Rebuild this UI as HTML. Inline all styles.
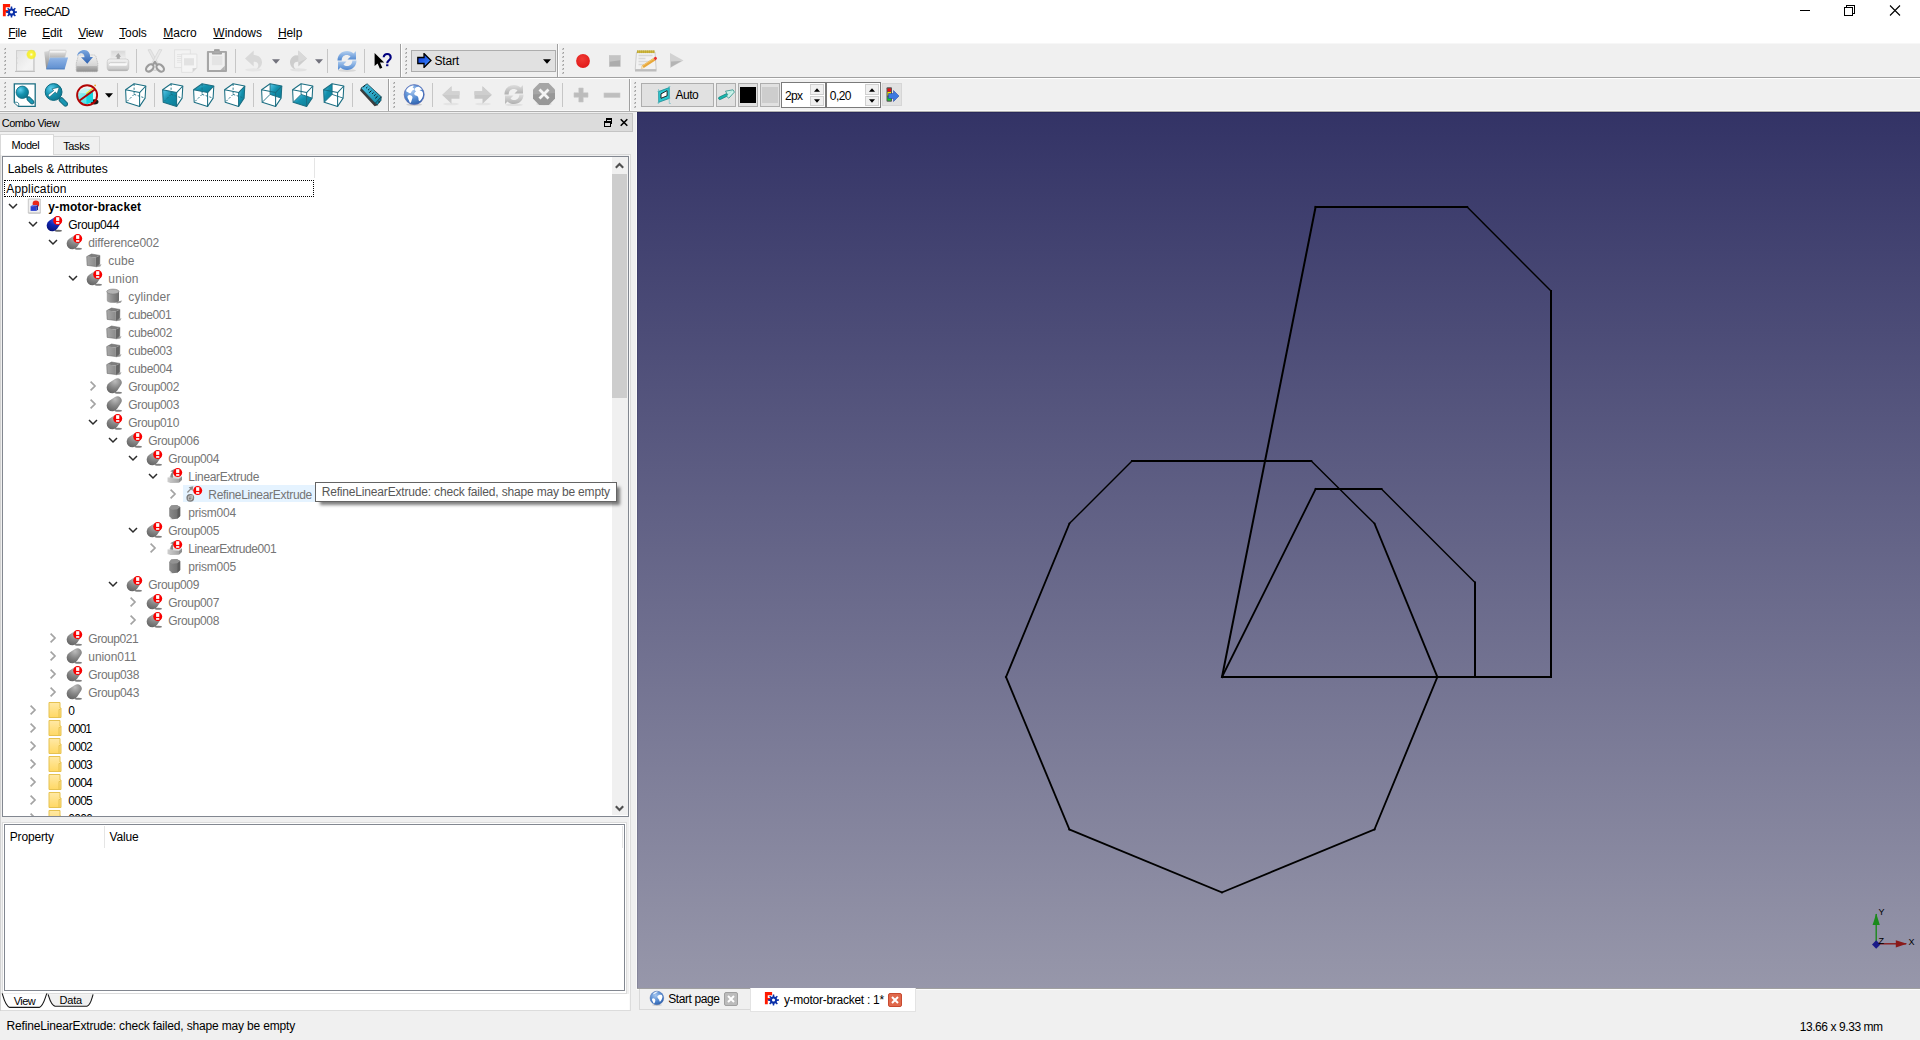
<!DOCTYPE html><html><head><meta charset="utf-8"><title>FreeCAD</title><style>
*{box-sizing:border-box;margin:0;padding:0}
html,body{width:1920px;height:1040px;overflow:hidden;background:#f0f0f0;font-family:"Liberation Sans",sans-serif;font-size:12px;color:#000}
.a{position:absolute}
.t{position:absolute;white-space:nowrap;line-height:14px;height:14px}
u{text-decoration:underline;text-underline-offset:1px}
.sep{position:absolute;width:1px;background:#c8c8c8}
.grip{position:absolute;width:3px}
</style></head><body>
<svg width="0" height="0" style="position:absolute"><defs>
<radialGradient id="gb" cx="0.55" cy="0.2" r="0.9"><stop offset="0" stop-color="#4a66ec"/><stop offset="0.45" stop-color="#0f26b4"/><stop offset="1" stop-color="#050e6c"/></radialGradient>
<radialGradient id="gg" cx="0.55" cy="0.2" r="0.9"><stop offset="0" stop-color="#bcbcbc"/><stop offset="0.5" stop-color="#868686"/><stop offset="1" stop-color="#5e5e5e"/></radialGradient>
<radialGradient id="gg2" cx="0.4" cy="0.25" r="0.8"><stop offset="0" stop-color="#b8b8b8"/><stop offset="0.7" stop-color="#8a8a8a"/><stop offset="1" stop-color="#7a7a7a"/></radialGradient>
<linearGradient id="gc" x1="0" y1="0" x2="1" y2="0"><stop offset="0" stop-color="#a8a8a8"/><stop offset="1" stop-color="#6c6c6c"/></linearGradient>
<linearGradient id="gcf" x1="0" y1="0" x2="1" y2="0"><stop offset="0" stop-color="#a8a8a8"/><stop offset="1" stop-color="#8a8a8a"/></linearGradient>
<linearGradient id="gcp" x1="0" y1="0" x2="1" y2="0"><stop offset="0" stop-color="#8a8a8a"/><stop offset="1" stop-color="#6a6a6a"/></linearGradient>
<linearGradient id="gcx" x1="0" y1="0" x2="1" y2="0"><stop offset="0" stop-color="#cfcfcf"/><stop offset="1" stop-color="#a4a4a4"/></linearGradient>
<linearGradient id="gf" x1="0" y1="0" x2="0" y2="1"><stop offset="0" stop-color="#ffe9a6"/><stop offset="1" stop-color="#ffd864"/></linearGradient>

<linearGradient id="opg" x1="0" y1="0" x2="0" y2="1"><stop offset="0" stop-color="#dcdcdc"/><stop offset="1" stop-color="#b4b4b4"/></linearGradient>
<linearGradient id="ppg" x1="0" y1="0" x2="0" y2="1"><stop offset="0" stop-color="#d8d8d8"/><stop offset="1" stop-color="#f2f2f2"/></linearGradient>
<linearGradient id="clipg" x1="0" y1="0" x2="0" y2="1"><stop offset="0" stop-color="#8e8e8e"/><stop offset="1" stop-color="#b4b4b4"/></linearGradient>
<linearGradient id="rul" x1="0" y1="0" x2="1" y2="1"><stop offset="0" stop-color="#52c8ea"/><stop offset="1" stop-color="#0d88a4"/></linearGradient>
<linearGradient id="pg" x1="0" y1="0" x2="1" y2="1"><stop offset="0" stop-color="#e2e2e2"/><stop offset=".7" stop-color="#f4f4f4"/><stop offset="1" stop-color="#f0f0f0"/></linearGradient>
<radialGradient id="glow"><stop offset="0" stop-color="#fffff0"/><stop offset=".35" stop-color="#fbf33a"/><stop offset=".75" stop-color="#f4ee20" stop-opacity=".85"/><stop offset="1" stop-color="#f4ee20" stop-opacity="0"/></radialGradient>
<linearGradient id="fblue" x1="0" y1="0" x2="0" y2="1"><stop offset="0" stop-color="#8fb4e6"/><stop offset="1" stop-color="#5f8fd0"/></linearGradient>
<linearGradient id="fgray" x1="0" y1="0" x2="0" y2="1"><stop offset="0" stop-color="#d8d8d8"/><stop offset="1" stop-color="#8a8a8a"/></linearGradient>
<linearGradient id="drv" x1="0" y1="0" x2="0" y2="1"><stop offset="0" stop-color="#f2f2f2"/><stop offset="1" stop-color="#c4c4c4"/></linearGradient>
<linearGradient id="drvf" x1="0" y1="0" x2="0" y2="1"><stop offset="0" stop-color="#b8b8b8"/><stop offset="1" stop-color="#8e8e8e"/></linearGradient>
<linearGradient id="barr" x1="0" y1="0" x2="0" y2="1"><stop offset="0" stop-color="#7aa7e0"/><stop offset="1" stop-color="#2f62b0"/></linearGradient>
<linearGradient id="prn" x1="0" y1="0" x2="0" y2="1"><stop offset="0" stop-color="#f4f4f4"/><stop offset="1" stop-color="#c2c2c2"/></linearGradient>
<radialGradient id="teal" cx=".35" cy=".3" r=".8"><stop offset="0" stop-color="#5fd0f0"/><stop offset=".5" stop-color="#1592ae"/><stop offset="1" stop-color="#0b7088"/></radialGradient>
<linearGradient id="tealf" x1="0" y1="0" x2="1" y2="1"><stop offset="0" stop-color="#58c8ea"/><stop offset=".45" stop-color="#1390ac"/><stop offset="1" stop-color="#0c7c96"/></linearGradient>
<radialGradient id="globe" cx=".4" cy=".3" r=".75"><stop offset="0" stop-color="#a8c8f0"/><stop offset=".6" stop-color="#4f86cf"/><stop offset="1" stop-color="#2c5ea8"/></radialGradient>
<radialGradient id="rec" cx=".45" cy=".35" r=".7"><stop offset="0" stop-color="#f03a34"/><stop offset="1" stop-color="#e01818"/></radialGradient>
<linearGradient id="refb" x1="0" y1="0" x2="0" y2="1"><stop offset="0" stop-color="#b4d0f0"/><stop offset="1" stop-color="#4d86d0"/></linearGradient>
<linearGradient id="refg" x1="0" y1="0" x2="0" y2="1"><stop offset="0" stop-color="#dedede"/><stop offset="1" stop-color="#b0b0b0"/></linearGradient>
<linearGradient id="sblue" x1="0" y1="0" x2="1" y2="1"><stop offset="0" stop-color="#0a2fd0"/><stop offset=".6" stop-color="#2a6cf0"/><stop offset="1" stop-color="#58a0ff"/></linearGradient>
<linearGradient id="cy" x1="0" y1="0" x2="1" y2="1"><stop offset="0" stop-color="#b8f4f4"/><stop offset="1" stop-color="#18d8e0"/></linearGradient>
<g id="i-blue"><ellipse cx="10.800" cy="14.700" rx="3.600" ry="1" fill="#3c3c3c" opacity=".75"/><path d="M1.750 4.850L7.520 1.020A4.300 4.300 0 0 1 13.480 6.980L9.650 12.750A5.700 5.700 0 1 1 1.750 4.850Z" fill="url(#gb)"/></g>
<g id="i-gray"><ellipse cx="10.800" cy="14.700" rx="3.600" ry="1" fill="#4a4a4a" opacity=".7"/><path d="M1.750 4.850L7.520 1.020A4.300 4.300 0 0 1 13.480 6.980L9.650 12.750A5.700 5.700 0 1 1 1.750 4.850Z" fill="url(#gg)"/></g>
<g id="i-badge"><circle cx="10.200" cy="4.600" r="4.500" fill="#fa0000"/><rect x="8.600" y="1.200" width="3.200" height="3.700" fill="#fff"/><rect x="8.600" y="6.100" width="3.200" height="1.700" fill="#fff"/></g>
<g id="i-cube"><path d="M8.500 13.500l5.500-1.300l-1.200 2.300l-4.300.8z" fill="#555" opacity=".6"/><path d="M-.8 4.600l4.800-2.600l8.400 1.400l-4.200 2.200z" fill="#7e7e7e"/><path d="M-.8 4.600l9 1l.2 9l-8.800-1.200z" fill="url(#gcf)"/><path d="M8.200 5.600l4.200-2.200l-.2 8.800l-3.800 2.400z" fill="#666"/><path d="M-.8 4.600l4.800-2.600l8.400 1.400l-.2 8.800l-3.800 2.400l-8.800-1.200z" fill="none" stroke="#5e5e5e" stroke-width=".5"/></g>
<g id="i-cyl"><path d="M9 13.800l5.600-1.200l-1.400 2.200l-4.200.6z" fill="#555" opacity=".6"/><path d="M-.7 3.600v8.600c0 3.500 12.200 3.500 12.200 0v-8.600z" fill="url(#gc)"/><ellipse cx="5.400" cy="3.600" rx="6.100" ry="2.500" fill="#b4b4b4" stroke="#7c7c7c" stroke-width=".6"/></g>
<g id="i-prism"><path d="M1 13l1.500 1.500h3l-2 1z" fill="#888" opacity=".5"/><path d="M1.700 4.200l2-2.700l5.500-.5l3.500 2v9l-2.800 2.800l-5 .5l-3.200-3z" fill="url(#gcp)"/><path d="M1.700 4.200l2-2.700l5.500-.5l3.500 2l-2.600 2.300l-5.400.4z" fill="#929292"/><path d="M10.100 5.300l2.600-2.300v9l-2.800 2.800z" fill="#5c5c5c"/></g>
<g id="i-ext"><path d="M0 9.600l3.500-1.800l11 .4l-3 2.600z" fill="#dcdcdc"/><path d="M0 9.600l11.500 1.200v4l-8.500.3l-3-1.200z" fill="url(#gcx)"/><path d="M11.500 10.800l3-2.600v3.700l-3 2.900z" fill="#8e8e8e"/><path d="M2.800 9.500c0-2.800.9-4.500 2.400-5.400l-2.600-.8l4.700-2.600l.5 5.600l-1.400-1.200c-.8.900-1 2.400-.8 4.600z" fill="#868686"/></g>
<g id="i-ref"><path d="M-.6 6l3.200-3.300l-1.500-1.500l4.700-1l-.8 4.800l-1.400-1.400l-3.200 3.500z" fill="#8c8c8c"/><circle cx="2.800" cy="11.800" r="3.900" fill="#7c7c7c"/><path d="M.9 11h2.900v2.900h-2.900zM.9 11l1.300-1.300h2.900v2.900l-1.300 1.300M3.800 11l1.300-1.300" fill="none" stroke="#d0d0d0" stroke-width=".8"/></g>
<g id="i-fold"><path d="M1.500 .5h11v5.500h1v9.500h-12z" fill="url(#gf)" stroke="#e6c251" stroke-width="1"/><path d="M11.500 15v-7.500h1.500" fill="none" stroke="#e6c251" stroke-width="1"/></g>
<g id="i-doc"><path d="M.8 1h12v14h-12z" fill="#f0f0f0" stroke="#c4c4c4" stroke-width=".9"/><path d="M1 15.200h12" stroke="#b0b0b0" stroke-width=".6"/><circle cx="8.400" cy="5.900" r="3.300" fill="#e8281c"/><path d="M3.100 8.200l1.600-1.200h5.800l-1.500 1.200z" fill="#7485e4"/><path d="M3.100 8.200h5.900v4.700h-5.900z" fill="#2b3fd0"/><path d="M9 8.200l1.500-1.200v4.500l-1.500 1.400z" fill="#1a2896"/></g>
<symbol id="logo" viewBox="0 0 20 20"><path d="M2.900 4h7.200v3.200h-4.350v2.700h2.600v2.400h-2.600v4h-2.850z" fill="#ff1a00"/><path d="M15.10 11.19L16.95 11.32L16.95 12.78L15.10 12.91L14.65 13.98L15.87 15.39L14.84 16.42L13.43 15.20L12.36 15.65L12.23 17.50L10.77 17.50L10.64 15.65L9.57 15.20L8.16 16.42L7.13 15.39L8.35 13.98L7.90 12.91L6.05 12.78L6.05 11.32L7.90 11.19L8.35 10.12L7.13 8.71L8.16 7.68L9.57 8.90L10.64 8.45L10.77 6.60L12.23 6.60L12.36 8.45L13.43 8.90L14.84 7.68L15.87 8.71L14.65 10.12ZM9.95 12.05a1.55 1.55 0 1 0 3.10 0a1.55 1.55 0 1 0 -3.10 0Z" fill="#0a2fa8" fill-rule="evenodd"/></symbol>
<symbol id="a-open" viewBox="0 0 10 10"><path d="M1 3l4 4l4-4" fill="none" stroke="#2b2b2b" stroke-width="1.500"/></symbol>
<symbol id="a-closed" viewBox="0 0 10 10"><path d="M2.600 .6l4.400 4.400l-4.400 4.400" fill="none" stroke="#a4a4a4" stroke-width="1.700"/></symbol>
</defs></svg>

<div class="a" style="left:0;top:0;width:1920px;height:43px;background:#fff"></div>
<svg class="a" style="left:0;top:0" width="20" height="20"><use href="#logo"/></svg>
<div class="t" style="left:23.9px;top:4.7px;letter-spacing:-0.644px;">FreeCAD</div>
<svg class="a" style="left:1780px;top:0" width="140" height="22" viewBox="0 0 140 22"><g stroke="#000" stroke-width="1" fill="none" shape-rendering="crispEdges"><path d="M19.5 10.5h10"/><path d="M64.5 7.5h8v8h-8z M66.5 7.5v-2h8v8h-2"/></g><path d="M110 5.5l10 10M120 5.5l-10 10" stroke="#000" stroke-width="1.1" fill="none"/></svg>
<div class="t" style="left:8.3px;top:25.7px;letter-spacing:-0.359px;"><u>F</u>ile</div>
<div class="t" style="left:42.2px;top:25.7px;letter-spacing:-0.219px;"><u>E</u>dit</div>
<div class="t" style="left:78.3px;top:25.7px;letter-spacing:-0.323px;"><u>V</u>iew</div>
<div class="t" style="left:119.2px;top:25.7px;letter-spacing:-0.103px;"><u>T</u>ools</div>
<div class="t" style="left:163.3px;top:25.7px;letter-spacing:0.012px;"><u>M</u>acro</div>
<div class="t" style="left:213.3px;top:25.7px;letter-spacing:0.003px;"><u>W</u>indows</div>
<div class="t" style="left:278.0px;top:25.7px;letter-spacing:-0.120px;"><u>H</u>elp</div>
<div class="a" style="left:0;top:43px;width:1920px;height:1px;background:#f7f7f7"></div>
<div class="a" style="left:0;top:77px;width:1920px;height:1px;background:#a0a0a0"></div>
<div class="a" style="left:0;top:78px;width:1920px;height:1px;background:#fff"></div>
<div class="a" style="left:0;top:110px;width:1920px;height:1px;background:#f9f9f9"></div>
<div class="a" style="left:0;top:111px;width:1920px;height:1px;background:#b0b0b0"></div>
<svg class="a" style="left:4px;top:48px" width="3" height="28"><rect x="1" y="0" width="1" height="1" fill="#9c9c9c"/><rect x="0" y="1" width="1" height="1" fill="#b8b8b8"/><rect x="1" y="1" width="1" height="1" fill="#c6c6c6"/><rect x="0" y="0" width="1" height="1" fill="#dcdcdc"/><rect x="1" y="4" width="1" height="1" fill="#9c9c9c"/><rect x="0" y="5" width="1" height="1" fill="#b8b8b8"/><rect x="1" y="5" width="1" height="1" fill="#c6c6c6"/><rect x="0" y="4" width="1" height="1" fill="#dcdcdc"/><rect x="1" y="8" width="1" height="1" fill="#9c9c9c"/><rect x="0" y="9" width="1" height="1" fill="#b8b8b8"/><rect x="1" y="9" width="1" height="1" fill="#c6c6c6"/><rect x="0" y="8" width="1" height="1" fill="#dcdcdc"/><rect x="1" y="12" width="1" height="1" fill="#9c9c9c"/><rect x="0" y="13" width="1" height="1" fill="#b8b8b8"/><rect x="1" y="13" width="1" height="1" fill="#c6c6c6"/><rect x="0" y="12" width="1" height="1" fill="#dcdcdc"/><rect x="1" y="16" width="1" height="1" fill="#9c9c9c"/><rect x="0" y="17" width="1" height="1" fill="#b8b8b8"/><rect x="1" y="17" width="1" height="1" fill="#c6c6c6"/><rect x="0" y="16" width="1" height="1" fill="#dcdcdc"/><rect x="1" y="20" width="1" height="1" fill="#9c9c9c"/><rect x="0" y="21" width="1" height="1" fill="#b8b8b8"/><rect x="1" y="21" width="1" height="1" fill="#c6c6c6"/><rect x="0" y="20" width="1" height="1" fill="#dcdcdc"/><rect x="1" y="24" width="1" height="1" fill="#9c9c9c"/><rect x="0" y="25" width="1" height="1" fill="#b8b8b8"/><rect x="1" y="25" width="1" height="1" fill="#c6c6c6"/><rect x="0" y="24" width="1" height="1" fill="#dcdcdc"/></svg>
<svg class="a" style="left:13px;top:49px" width="24" height="24" viewBox="0 0 24 24"><rect x="2.200" y="21.800" width="19.600" height="1.100" rx=".5" fill="#b4b4b4"/><rect x="3.500" y="1.600" width="17.500" height="20.400" fill="url(#pg)" stroke="#cdcdcd" stroke-width=".9"/><path d="M20.900 2v19.800" stroke="#c2c2c2" stroke-width=".8"/><path d="M4.500 8.500v1M4.500 13.500v1" stroke="#d8d8d8"/><circle cx="18.300" cy="5.500" r="5.300" fill="url(#glow)"/></svg>
<svg class="a" style="left:44px;top:49px" width="24" height="24" viewBox="0 0 24 24"><path d="M.2 2.800l4.600-.8l.9 2l-1.200 15.500l-2.300.3z" fill="url(#fgray)"/><path d="M5.300 1.200h16c.8 0 .9.800.7 1.500l-1.300 6.300h-15.400z" fill="#f4f4f4" stroke="#bdbdbd" stroke-width=".6"/><path d="M5.600 3.400h16.100l-1.100 5.400h-15z" fill="url(#opg)"/><path d="M5.700 9l18.300-.2l-3.300 11.200h-18.400z" fill="url(#fblue)"/><path d="M2.300 20h18.400" stroke="#4878b8" stroke-width=".9"/><path d="M5.700 9l18.300-.2" stroke="#9cc0ea" stroke-width=".6"/></svg>
<svg class="a" style="left:75px;top:49px" width="24" height="24" viewBox="0 0 24 24"><path d="M4.700 6h14.300c1 0 1.500.5 1.900 1.500l1.900 6.800v7.200c0 .8-.5 1.200-1.200 1.200h-19.200c-.7 0-1.200-.4-1.200-1.200v-7.200l1.900-6.800c.3-1 .8-1.500 1.600-1.500z" fill="url(#drv)" stroke="#b2b2b2" stroke-width=".7" stroke-dasharray="1.200 .6"/><path d="M1.500 17h21v4.500c0 .7-.4 1.100-1 1.100h-19c-.6 0-1-.4-1-1.100z" fill="url(#drvf)"/><path d="M3.700 18.300h10.500v1.800h-10.500z" fill="#a0a0a0" opacity=".6"/><path d="M2 7.500c.5-4.500 4-6.700 7.500-6.500c3.500.3 5.500 2.500 5.700 7.100l2.800-.1l-5.700 6.700l-6.300-6.400l3.500 0c0-2.800-1.500-4.100-3.500-4c-1.500.1-3 1.200-4 3.200z" fill="url(#barr)"/></svg>
<svg class="a" style="left:106px;top:49px" width="24" height="24" viewBox="0 0 24 24"><rect x="5" y="1.700" width="14.300" height="9.500" fill="url(#ppg)" stroke="#e8e8e8" stroke-width=".8"/><path d="M12.300 4l2.700 3.700h-1.200v3h-3v-3h-1.500z" fill="#a9a9a9"/><rect x="1.200" y="10" width="21.500" height="11.700" rx="2.600" fill="url(#prn)" stroke="#c0c0c0" stroke-width=".6"/><rect x="3" y="13.700" width="18" height="3" rx="1.200" fill="#f8f8f8"/><path d="M3.300 14.800c0-.8.5-1.100 1.200-1.100h15.200" stroke="#b8b8b8" stroke-width=".6" fill="none"/><path d="M2.500 21.200h19" stroke="#aeaeae" stroke-width="1"/></svg>
<div class="a" style="left:136px;top:49px;width:1px;height:24px;background:#c6c6c6"></div>
<svg class="a" style="left:143px;top:49px" width="24" height="24" viewBox="0 0 24 24"><ellipse cx="12" cy="21.300" rx="2.200" ry=".7" fill="#d4d4d4"/><path d="M5 .8l2.600-.3l8.200 15l-2.300 1.300z" fill="#e6e6e6" stroke="#d0d0d0" stroke-width=".6"/><path d="M18.800 .8l-2.600-.3l-8.200 15l2.300 1.300z" fill="#e9e9e9" stroke="#d0d0d0" stroke-width=".6"/><ellipse cx="6.800" cy="19" rx="4.300" ry="2.900" transform="rotate(-42 6.800 19)" fill="none" stroke="#9c9c9c" stroke-width="2.200"/><ellipse cx="17.200" cy="19" rx="4.300" ry="2.900" transform="rotate(42 17.200 19)" fill="none" stroke="#9c9c9c" stroke-width="2.200"/><path d="M9.500 16.500l2.400-3.700l2.400 3.700" stroke="#9c9c9c" stroke-width="2.200" fill="none" stroke-linejoin="round"/></svg>
<svg class="a" style="left:174px;top:49px" width="24" height="24" viewBox="0 0 24 24"><rect x=".6" y=".8" width="15.700" height="17.800" fill="#f3f3f3" stroke="#e0e0e0" stroke-width=".9"/><path d="M3 5.600h5M3 7.500h5M3 9.500h5M3 11.400h5M3 13.300h5" stroke="#e2e2e2" stroke-width=".9"/><path d="M7.600 5.100h15.300v14l-4.500 4.300h-10.800z" fill="#f5f5f5" stroke="#e0e0e0" stroke-width=".9"/><path d="M10 9.200h10v7.200h-10z" fill="#e2e2e2"/><path d="M18.300 23.300c.5-1.500.5-3 .2-4.300c1.500.4 3 .3 4.400-.2z" fill="#d2d2d2"/></svg>
<svg class="a" style="left:205px;top:49px" width="24" height="24" viewBox="0 0 24 24"><rect x="1.900" y="2" width="20.100" height="21" rx="1" fill="#a6a6a6"/><rect x="4" y="3.800" width="15.800" height="17.200" fill="#f0f0f0"/><path d="M6.900 7h10.500v9.200h-10.500z" fill="#e4e4e4"/><path d="M15.500 21l4.300-4.300v4.300z" fill="#b4b4b4"/><path d="M6.900 3.200h10.100v1.400c0 .6-.5 1-1 1h-8.100c-.5 0-1-.4-1-1z" fill="#a2a2a2"/><rect x="9" y=".2" width="5.800" height="3.200" rx=".8" fill="url(#clipg)"/></svg>
<div class="a" style="left:235px;top:49px;width:1px;height:24px;background:#c6c6c6"></div>
<svg class="a" style="left:242px;top:49px" width="24" height="24" viewBox="0 0 24 24"><ellipse cx="11.500" cy="20.800" rx="8.500" ry="1.600" fill="#e6e6e6"/><path d="M3 9.500l8.700-8.100v4.600c5.300 0 8.500 3.500 8.300 7.700c-.2 3.300-2.500 5.800-5.500 6.500c2-2.200 2.300-4.700 1-6.200c-1-1.100-2.300-1.200-3.800-1.200v4.700z" fill="#d9d9d9"/></svg>
<svg class="a" style="left:271.5px;top:59px" width="8" height="5" viewBox="0 0 8 5"><path d="M0 .3h8l-4 4.400z" fill="#72727c"/></svg>
<svg class="a" style="left:285.5px;top:49px" width="24" height="24" viewBox="0 0 24 24"><ellipse cx="12.500" cy="20.800" rx="8.500" ry="1.600" fill="#e2e2e2"/><path d="M21 9.500l-8.700-8.100v4.600c-5.300 0-8.500 3.500-8.300 7.700c.2 3.300 2.500 5.800 5.500 6.500c-2-2.200-2.300-4.700-1-6.200c1-1.100 2.300-1.200 3.800-1.200v4.700z" fill="#cdcdcd"/><path d="M21 9.500l-8.700-8.100v4.600c-2 0-3.600.5-4.900 1.300c1.500-.3 3.200-.2 4.900-.2v6.500z" fill="#d9d9d9"/></svg>
<svg class="a" style="left:314.5px;top:59px" width="8" height="5" viewBox="0 0 8 5"><path d="M0 .3h8l-4 4.400z" fill="#72727c"/></svg>
<div class="a" style="left:327px;top:49px;width:1px;height:24px;background:#c6c6c6"></div>
<svg class="a" style="left:334.5px;top:49px" width="24" height="24" viewBox="0 0 24 24"><ellipse cx="12" cy="21.500" rx="9" ry="1.500" fill="#d8d8d8"/><path d="M2.500 11.500c0-5.500 4-9.500 9.500-9.500c3 0 5 1 6.500 2.500l2.500-2.500v8.500h-8.500l3-3c-1-1-2.200-1.500-3.800-1.500c-3 0-5 2.200-5 5.500z" fill="url(#refb)"/><path d="M21.500 11.500c0 5.500-4 9.500-9.500 9.500c-3 0-5-1-6.500-2.500l-2.500 2.500v-8.500h8.500l-3 3c1 1 2.200 1.500 3.800 1.500c3 0 5-2.200 5-5.500z" fill="url(#refb)"/></svg>
<div class="a" style="left:364px;top:49px;width:1px;height:24px;background:#c6c6c6"></div>
<svg class="a" style="left:371px;top:49px" width="24" height="24" viewBox="0 0 24 24"><path d="M3.600 4.100v13l3-2.700l2.300 5.400l2.400-1l-2.300-5.300h4.200z" fill="#000"/><path d="M12.700 8.200c0-4.200 7-4.200 7 .2c0 2.800-3.500 2.800-3.500 5.800" fill="none" stroke="#00007e" stroke-width="2.100"/><rect x="15.100" y="15.300" width="2.300" height="1.900" fill="#00007e"/></svg>
<div class="a" style="left:400px;top:44px;width:1px;height:33px;background:#a0a0a0"></div><div class="a" style="left:401px;top:44px;width:1px;height:33px;background:#fff"></div>
<svg class="a" style="left:405px;top:48px" width="3" height="28"><rect x="1" y="0" width="1" height="1" fill="#9c9c9c"/><rect x="0" y="1" width="1" height="1" fill="#b8b8b8"/><rect x="1" y="1" width="1" height="1" fill="#c6c6c6"/><rect x="0" y="0" width="1" height="1" fill="#dcdcdc"/><rect x="1" y="4" width="1" height="1" fill="#9c9c9c"/><rect x="0" y="5" width="1" height="1" fill="#b8b8b8"/><rect x="1" y="5" width="1" height="1" fill="#c6c6c6"/><rect x="0" y="4" width="1" height="1" fill="#dcdcdc"/><rect x="1" y="8" width="1" height="1" fill="#9c9c9c"/><rect x="0" y="9" width="1" height="1" fill="#b8b8b8"/><rect x="1" y="9" width="1" height="1" fill="#c6c6c6"/><rect x="0" y="8" width="1" height="1" fill="#dcdcdc"/><rect x="1" y="12" width="1" height="1" fill="#9c9c9c"/><rect x="0" y="13" width="1" height="1" fill="#b8b8b8"/><rect x="1" y="13" width="1" height="1" fill="#c6c6c6"/><rect x="0" y="12" width="1" height="1" fill="#dcdcdc"/><rect x="1" y="16" width="1" height="1" fill="#9c9c9c"/><rect x="0" y="17" width="1" height="1" fill="#b8b8b8"/><rect x="1" y="17" width="1" height="1" fill="#c6c6c6"/><rect x="0" y="16" width="1" height="1" fill="#dcdcdc"/><rect x="1" y="20" width="1" height="1" fill="#9c9c9c"/><rect x="0" y="21" width="1" height="1" fill="#b8b8b8"/><rect x="1" y="21" width="1" height="1" fill="#c6c6c6"/><rect x="0" y="20" width="1" height="1" fill="#dcdcdc"/><rect x="1" y="24" width="1" height="1" fill="#9c9c9c"/><rect x="0" y="25" width="1" height="1" fill="#b8b8b8"/><rect x="1" y="25" width="1" height="1" fill="#c6c6c6"/><rect x="0" y="24" width="1" height="1" fill="#dcdcdc"/></svg>
<div class="a" style="left:411px;top:50px;width:145px;height:22px;background:#e1e1e1;border:1px solid #adadad"></div>
<svg class="a" style="left:416.5px;top:53px" width="15" height="15" viewBox="0 0 15 15"><path d="M0.800 4.500h6.200v-4l7 7l-7 7v-4h-6.200z" fill="url(#sblue)" stroke="#000" stroke-width="1.300" stroke-linejoin="miter"/></svg>
<div class="t" style="left:434.5px;top:53.7px;letter-spacing:-0.168px;">Start</div>
<svg class="a" style="left:542.5px;top:59px" width="8" height="5" viewBox="0 0 8 5"><path d="M0 .3h8l-4 4.400z" fill="#000"/></svg>
<div class="a" style="left:557px;top:44px;width:1px;height:33px;background:#a0a0a0"></div><div class="a" style="left:558px;top:44px;width:1px;height:33px;background:#fff"></div>
<svg class="a" style="left:562px;top:48px" width="3" height="28"><rect x="1" y="0" width="1" height="1" fill="#9c9c9c"/><rect x="0" y="1" width="1" height="1" fill="#b8b8b8"/><rect x="1" y="1" width="1" height="1" fill="#c6c6c6"/><rect x="0" y="0" width="1" height="1" fill="#dcdcdc"/><rect x="1" y="4" width="1" height="1" fill="#9c9c9c"/><rect x="0" y="5" width="1" height="1" fill="#b8b8b8"/><rect x="1" y="5" width="1" height="1" fill="#c6c6c6"/><rect x="0" y="4" width="1" height="1" fill="#dcdcdc"/><rect x="1" y="8" width="1" height="1" fill="#9c9c9c"/><rect x="0" y="9" width="1" height="1" fill="#b8b8b8"/><rect x="1" y="9" width="1" height="1" fill="#c6c6c6"/><rect x="0" y="8" width="1" height="1" fill="#dcdcdc"/><rect x="1" y="12" width="1" height="1" fill="#9c9c9c"/><rect x="0" y="13" width="1" height="1" fill="#b8b8b8"/><rect x="1" y="13" width="1" height="1" fill="#c6c6c6"/><rect x="0" y="12" width="1" height="1" fill="#dcdcdc"/><rect x="1" y="16" width="1" height="1" fill="#9c9c9c"/><rect x="0" y="17" width="1" height="1" fill="#b8b8b8"/><rect x="1" y="17" width="1" height="1" fill="#c6c6c6"/><rect x="0" y="16" width="1" height="1" fill="#dcdcdc"/><rect x="1" y="20" width="1" height="1" fill="#9c9c9c"/><rect x="0" y="21" width="1" height="1" fill="#b8b8b8"/><rect x="1" y="21" width="1" height="1" fill="#c6c6c6"/><rect x="0" y="20" width="1" height="1" fill="#dcdcdc"/><rect x="1" y="24" width="1" height="1" fill="#9c9c9c"/><rect x="0" y="25" width="1" height="1" fill="#b8b8b8"/><rect x="1" y="25" width="1" height="1" fill="#c6c6c6"/><rect x="0" y="24" width="1" height="1" fill="#dcdcdc"/></svg>
<svg class="a" style="left:571px;top:49px" width="24" height="24" viewBox="0 0 24 24"><circle cx="12" cy="12" r="6.900" fill="url(#rec)"/></svg>
<svg class="a" style="left:602.5px;top:49px" width="24" height="24" viewBox="0 0 24 24"><rect x="6" y="6.300" width="11.500" height="11.500" fill="#c4c4c4"/><path d="M6.500 12.800l10.500-1.500v6h-10.500z" fill="#acacac"/><rect x="6.250" y="6.550" width="11" height="11" fill="none" stroke="#c8c8c8" stroke-width=".5"/></svg>
<svg class="a" style="left:633.7px;top:49px" width="24" height="24" viewBox="0 0 24 24"><path d="M2.500 3h18.500l1.200 17.500h-21z" fill="#f2f2f2" stroke="#c4c4c4" stroke-width=".8"/><path d="M1 20.300h21.500v2.200h-21.500z" fill="#bdbdbd"/><path d="M4.500 6.500h14M4.500 9.500h7M4.500 12.500h12M4.500 15.500h8" stroke="#d8d8d8" stroke-width="1.300"/><path d="M3 1.500h17.500v2.500h-17.500z" fill="#d8c24a"/><path d="M3.800 1.200v3M5.800 1.200v3M7.800 1.200v3M9.800 1.200v3M11.800 1.200v3M13.800 1.200v3M15.800 1.200v3M17.800 1.200v3M19.800 1.200v3" stroke="#a89020" stroke-width=".7"/><path d="M8 16.500l11.500-7.500l1.800 2.600l-11.500 7.300l-3 .8z" fill="#e8a83a"/><path d="M8 16.500l1.800 2.400l-3 .8z" fill="#f4e4c0"/><path d="M19.500 9l1.800-1.200c.8-.4 2.200 1.500 1.500 2.300l-1.500 1.500z" fill="#e83030"/><path d="M8.500 16.800l11.500-7.300" stroke="#f6cc78" stroke-width=".8"/></svg>
<svg class="a" style="left:664.5px;top:49px" width="24" height="24" viewBox="0 0 24 24"><path d="M5 4l13.500 7.500l-13.500 7.500z" fill="#d2d2d2"/><path d="M6 12.500l10.500-.5l-10.500 6z" fill="#b4b4b4"/></svg>
<svg class="a" style="left:4px;top:82px" width="3" height="28"><rect x="1" y="0" width="1" height="1" fill="#9c9c9c"/><rect x="0" y="1" width="1" height="1" fill="#b8b8b8"/><rect x="1" y="1" width="1" height="1" fill="#c6c6c6"/><rect x="0" y="0" width="1" height="1" fill="#dcdcdc"/><rect x="1" y="4" width="1" height="1" fill="#9c9c9c"/><rect x="0" y="5" width="1" height="1" fill="#b8b8b8"/><rect x="1" y="5" width="1" height="1" fill="#c6c6c6"/><rect x="0" y="4" width="1" height="1" fill="#dcdcdc"/><rect x="1" y="8" width="1" height="1" fill="#9c9c9c"/><rect x="0" y="9" width="1" height="1" fill="#b8b8b8"/><rect x="1" y="9" width="1" height="1" fill="#c6c6c6"/><rect x="0" y="8" width="1" height="1" fill="#dcdcdc"/><rect x="1" y="12" width="1" height="1" fill="#9c9c9c"/><rect x="0" y="13" width="1" height="1" fill="#b8b8b8"/><rect x="1" y="13" width="1" height="1" fill="#c6c6c6"/><rect x="0" y="12" width="1" height="1" fill="#dcdcdc"/><rect x="1" y="16" width="1" height="1" fill="#9c9c9c"/><rect x="0" y="17" width="1" height="1" fill="#b8b8b8"/><rect x="1" y="17" width="1" height="1" fill="#c6c6c6"/><rect x="0" y="16" width="1" height="1" fill="#dcdcdc"/><rect x="1" y="20" width="1" height="1" fill="#9c9c9c"/><rect x="0" y="21" width="1" height="1" fill="#b8b8b8"/><rect x="1" y="21" width="1" height="1" fill="#c6c6c6"/><rect x="0" y="20" width="1" height="1" fill="#dcdcdc"/><rect x="1" y="24" width="1" height="1" fill="#9c9c9c"/><rect x="0" y="25" width="1" height="1" fill="#b8b8b8"/><rect x="1" y="25" width="1" height="1" fill="#c6c6c6"/><rect x="0" y="24" width="1" height="1" fill="#dcdcdc"/></svg>
<svg class="a" style="left:13px;top:83px" width="24" height="24" viewBox="0 0 24 24"><path d="M1.300 .8h20.900v22.500h-16.700l-4.200-3.800z" fill="#fff" stroke="#1b6e82" stroke-width="1.300"/><path d="M1.300 19.500c1.500-.5 3.200-.3 4 .5c.6.800.5 2 .2 3.300" fill="#fff" stroke="#1b6e82" stroke-width=".9"/><path d="M13.300 13.300l2.500 2.500" stroke="#1b6e82" stroke-width="2.200"/><path d="M15.800 15.800l3.300 3.300" stroke="#1b6e82" stroke-width="4.600" stroke-linecap="round"/><path d="M16 16l3 3" stroke="#1a96b2" stroke-width="2.800" stroke-linecap="round"/><circle cx="9.300" cy="9.300" r="6.200" fill="url(#teal)" stroke="#0e6a80" stroke-width=".8"/></svg>
<svg class="a" style="left:44px;top:83px" width="24" height="24" viewBox="0 0 24 24"><path d="M14.500 14.500l3 3" stroke="#1b6e82" stroke-width="2.400"/><path d="M17.300 16.800l4.200 4.200" stroke="#1b6e82" stroke-width="5.200" stroke-linecap="round"/><path d="M17.500 17l3.800 3.800" stroke="#1a96b2" stroke-width="3.200" stroke-linecap="round"/><circle cx="9.600" cy="9" r="8.400" fill="url(#teal)" stroke="#0e6a80" stroke-width="1"/><path d="M15.200 4.200l-7.400 1.700l2 1.600l-5.900 4.500l1.700 1.900l5.600-4.900l1.900 1.800z" fill="#fff" stroke="#0e5a6c" stroke-width=".6"/></svg>
<svg class="a" style="left:75px;top:83px" width="24" height="24" viewBox="0 0 24 24"><ellipse cx="19.500" cy="18.800" rx="4" ry="2.600" fill="#1a1a1a"/><path d="M3 9.500l6.500-4l8.500 1.500v11.500l-7 3l-8-3.500z" fill="url(#cy)"/><path d="M11 10.500l7-3.500v11.500l-7 3z" fill="#14d4e0"/><path d="M3 9.500l8 1l7-3.500l-8.500-1.500z" fill="#c4f4f4"/><path d="M11 10.500v11" stroke="#7ae8ec" stroke-width=".6"/><path d="M11.200 10.800l7-5.800" stroke="#f4e020" stroke-width="1.300"/><circle cx="20.100" cy="2.400" r=".9" fill="#f0a428"/><circle cx="12.100" cy="12.200" r="10" fill="none" stroke="#b20404" stroke-width="1.900"/><path d="M4.600 17.600l15.200-11.100" stroke="#b20404" stroke-width="1.900"/></svg>
<svg class="a" style="left:104.5px;top:93px" width="8" height="5" viewBox="0 0 8 5"><path d="M0 .3h8l-4 4.400z" fill="#000"/></svg>
<div class="a" style="left:117px;top:83px;width:1px;height:24px;background:#c6c6c6"></div>
<svg class="a" style="left:125px;top:83px" width="24" height="24" viewBox="0 0 24 24"><polygon points="0.6,6.7 9.1,0.8 20.8,3 20.1,15.1 14.6,23.4 1.2,19.3" fill="#fff"/><g stroke="#1b6e82" stroke-width=".9" fill="none" stroke-dasharray="2.2 1.600"><path d="M9.1 0.8L9.1 11.4M9.1 11.4L1.2 19.3M9.1 11.4L20.1 15.1"/></g><g stroke="#1b6e82" stroke-width="1.050" fill="none" stroke-linejoin="round"><polygon points="0.6,6.7 14.6,9.6 14.6,23.4 1.2,19.3"/><polyline points="0.6,6.7 9.1,0.8 20.8,3 14.6,9.6"/><polyline points="20.8,3 20.1,15.1 14.6,23.4"/></g></svg>
<div class="a" style="left:154px;top:83px;width:1px;height:24px;background:#c6c6c6"></div>
<svg class="a" style="left:161.6px;top:83px" width="24" height="24" viewBox="0 0 24 24"><polygon points="0.6,6.7 9.1,0.8 20.8,3 20.1,15.1 14.6,23.4 1.2,19.3" fill="#fff"/><polygon points="0.6,6.7 14.6,9.6 14.6,23.4 1.2,19.3" fill="url(#tealf)"/><g stroke="#1b6e82" stroke-width=".9" fill="none" stroke-dasharray="2.2 1.600"><path d="M9.1 0.8L9.1 11.4M9.1 11.4L1.2 19.3M9.1 11.4L20.1 15.1"/></g><g stroke="#1b6e82" stroke-width="1.050" fill="none" stroke-linejoin="round"><polygon points="0.6,6.7 14.6,9.6 14.6,23.4 1.2,19.3"/><polyline points="0.6,6.7 9.1,0.8 20.8,3 14.6,9.6"/><polyline points="20.8,3 20.1,15.1 14.6,23.4"/></g></svg>
<svg class="a" style="left:192.6px;top:83px" width="24" height="24" viewBox="0 0 24 24"><polygon points="0.6,6.7 9.1,0.8 20.8,3 20.1,15.1 14.6,23.4 1.2,19.3" fill="#fff"/><polygon points="0.6,6.7 9.1,0.8 20.8,3 14.6,9.6" fill="url(#tealf)"/><g stroke="#1b6e82" stroke-width=".9" fill="none" stroke-dasharray="2.2 1.600"><path d="M9.1 0.8L9.1 11.4M9.1 11.4L1.2 19.3M9.1 11.4L20.1 15.1"/></g><g stroke="#1b6e82" stroke-width="1.050" fill="none" stroke-linejoin="round"><polygon points="0.6,6.7 14.6,9.6 14.6,23.4 1.2,19.3"/><polyline points="0.6,6.7 9.1,0.8 20.8,3 14.6,9.6"/><polyline points="20.8,3 20.1,15.1 14.6,23.4"/></g></svg>
<svg class="a" style="left:223.6px;top:83px" width="24" height="24" viewBox="0 0 24 24"><polygon points="0.6,6.7 9.1,0.8 20.8,3 20.1,15.1 14.6,23.4 1.2,19.3" fill="#fff"/><polygon points="14.6,9.6 20.8,3 20.1,15.1 14.6,23.4" fill="url(#tealf)"/><g stroke="#1b6e82" stroke-width=".9" fill="none" stroke-dasharray="2.2 1.600"><path d="M9.1 0.8L9.1 11.4M9.1 11.4L1.2 19.3M9.1 11.4L20.1 15.1"/></g><g stroke="#1b6e82" stroke-width="1.050" fill="none" stroke-linejoin="round"><polygon points="0.6,6.7 14.6,9.6 14.6,23.4 1.2,19.3"/><polyline points="0.6,6.7 9.1,0.8 20.8,3 14.6,9.6"/><polyline points="20.8,3 20.1,15.1 14.6,23.4"/></g></svg>
<div class="a" style="left:253px;top:83px;width:1px;height:24px;background:#c6c6c6"></div>
<svg class="a" style="left:260.6px;top:83px" width="24" height="24" viewBox="0 0 24 24"><polygon points="0.6,6.7 9.1,0.8 20.8,3 20.1,15.1 14.6,23.4 1.2,19.3" fill="#fff"/><polygon points="9.1,0.8 20.8,3 20.1,15.1 9.1,11.4" fill="url(#tealf)"/><g stroke="#1b6e82" stroke-width=".9" fill="none"><path d="M9.1 0.8L9.1 11.4M9.1 11.4L1.2 19.3M9.1 11.4L20.1 15.1"/></g><g stroke="#1b6e82" stroke-width="1.050" fill="none" stroke-linejoin="round"><polygon points="0.6,6.7 14.6,9.6 14.6,23.4 1.2,19.3"/><polyline points="0.6,6.7 9.1,0.8 20.8,3 14.6,9.6"/><polyline points="20.8,3 20.1,15.1 14.6,23.4"/></g></svg>
<svg class="a" style="left:291.6px;top:83px" width="24" height="24" viewBox="0 0 24 24"><polygon points="0.6,6.7 9.1,0.8 20.8,3 20.1,15.1 14.6,23.4 1.2,19.3" fill="#fff"/><polygon points="1.2,19.3 9.1,11.4 20.1,15.1 14.6,23.4" fill="url(#tealf)"/><g stroke="#1b6e82" stroke-width=".9" fill="none"><path d="M9.1 0.8L9.1 11.4M9.1 11.4L1.2 19.3M9.1 11.4L20.1 15.1"/></g><g stroke="#1b6e82" stroke-width="1.050" fill="none" stroke-linejoin="round"><polygon points="0.6,6.7 14.6,9.6 14.6,23.4 1.2,19.3"/><polyline points="0.6,6.7 9.1,0.8 20.8,3 14.6,9.6"/><polyline points="20.8,3 20.1,15.1 14.6,23.4"/></g></svg>
<svg class="a" style="left:322.6px;top:83px" width="24" height="24" viewBox="0 0 24 24"><polygon points="0.6,6.7 9.1,0.8 20.8,3 20.1,15.1 14.6,23.4 1.2,19.3" fill="#fff"/><polygon points="0.6,6.7 9.1,0.8 9.1,11.4 1.2,19.3" fill="url(#tealf)"/><g stroke="#1b6e82" stroke-width=".9" fill="none"><path d="M9.1 0.8L9.1 11.4M9.1 11.4L1.2 19.3M9.1 11.4L20.1 15.1"/></g><g stroke="#1b6e82" stroke-width="1.050" fill="none" stroke-linejoin="round"><polygon points="0.6,6.7 14.6,9.6 14.6,23.4 1.2,19.3"/><polyline points="0.6,6.7 9.1,0.8 20.8,3 14.6,9.6"/><polyline points="20.8,3 20.1,15.1 14.6,23.4"/></g></svg>
<div class="a" style="left:352px;top:83px;width:1px;height:24px;background:#c6c6c6"></div>
<svg class="a" style="left:359px;top:83px" width="24" height="24" viewBox="0 0 24 24"><path d="M2 5.100l-1 2.300l14.600 15.900l3.900-1.200l-3.100-1.800z" fill="#3c3c3c"/><path d="M2 5.100l6.100-4.350l14.200 13.050l-5.900 6.500z" fill="url(#rul)" stroke="#082c36" stroke-width=".7" stroke-linejoin="round"/><path d="M16.400 20.300l5.900-6.500l-.3 3.700l-3.600 4.200z" fill="#0f8aa6" stroke="#082c36" stroke-width=".6"/><path d="M19.800 17.500l1.200 1.500l-1.500 1z" fill="#111"/><path d="M6.300 2.100l-2.200 2M8.400 4l-1.300 1.200M10.400 5.900l-1.300 1.200M12.400 7.700l-2.200 2M14.500 9.600l-1.300 1.200M16.500 11.500l-1.300 1.200M18.500 13.300l-2.200 2" stroke="#04181e" stroke-width="1"/></svg>
<div class="a" style="left:388px;top:79px;width:1px;height:32px;background:#a0a0a0"></div><div class="a" style="left:389px;top:79px;width:1px;height:32px;background:#fff"></div>
<svg class="a" style="left:393px;top:82px" width="3" height="28"><rect x="1" y="0" width="1" height="1" fill="#9c9c9c"/><rect x="0" y="1" width="1" height="1" fill="#b8b8b8"/><rect x="1" y="1" width="1" height="1" fill="#c6c6c6"/><rect x="0" y="0" width="1" height="1" fill="#dcdcdc"/><rect x="1" y="4" width="1" height="1" fill="#9c9c9c"/><rect x="0" y="5" width="1" height="1" fill="#b8b8b8"/><rect x="1" y="5" width="1" height="1" fill="#c6c6c6"/><rect x="0" y="4" width="1" height="1" fill="#dcdcdc"/><rect x="1" y="8" width="1" height="1" fill="#9c9c9c"/><rect x="0" y="9" width="1" height="1" fill="#b8b8b8"/><rect x="1" y="9" width="1" height="1" fill="#c6c6c6"/><rect x="0" y="8" width="1" height="1" fill="#dcdcdc"/><rect x="1" y="12" width="1" height="1" fill="#9c9c9c"/><rect x="0" y="13" width="1" height="1" fill="#b8b8b8"/><rect x="1" y="13" width="1" height="1" fill="#c6c6c6"/><rect x="0" y="12" width="1" height="1" fill="#dcdcdc"/><rect x="1" y="16" width="1" height="1" fill="#9c9c9c"/><rect x="0" y="17" width="1" height="1" fill="#b8b8b8"/><rect x="1" y="17" width="1" height="1" fill="#c6c6c6"/><rect x="0" y="16" width="1" height="1" fill="#dcdcdc"/><rect x="1" y="20" width="1" height="1" fill="#9c9c9c"/><rect x="0" y="21" width="1" height="1" fill="#b8b8b8"/><rect x="1" y="21" width="1" height="1" fill="#c6c6c6"/><rect x="0" y="20" width="1" height="1" fill="#dcdcdc"/><rect x="1" y="24" width="1" height="1" fill="#9c9c9c"/><rect x="0" y="25" width="1" height="1" fill="#b8b8b8"/><rect x="1" y="25" width="1" height="1" fill="#c6c6c6"/><rect x="0" y="24" width="1" height="1" fill="#dcdcdc"/></svg>
<svg class="a" style="left:402px;top:83px" width="24" height="24" viewBox="0 0 24 24"><ellipse cx="12.200" cy="21.600" rx="8" ry="1.300" fill="#cfcfcf"/><circle cx="12.200" cy="11.600" r="10" fill="url(#globe)" stroke="#5566b0" stroke-width=".7"/><path d="M4.600 6.500c1.500-2.200 4-3.600 6.300-3.900c1.500 0 1 .9-.2 1.400c-.3.800 1.200 1 1.500 1.800c.2 1-1.500 1.300-2.300 2.200c-.7.900-.5 2-1.700 2.300c-1.300.2-1.600-1.200-2.700-1.300c-1.200 0-1.700-1.200-.9-2.500z" fill="#fff"/><path d="M6.100 12.600c1-.9 2.500-.6 3.500.2c1 .9 1.200 2 .5 3.300c-.6 1.200-.5 2.500-1.300 3.500c-.6.700-1.200.2-1.400-.8c-.3-1.500-1.200-2.400-1.700-3.700c-.3-.9-.3-1.800.4-2.500z" fill="#fff"/><path d="M12.700 5.800c.8-1.500 2.500-2.200 4-2c1.200.6 2.500 1.500 3.300 2.800c-.8.500-1.800.2-2.500.7c.9.300 2 .5 2.800 1.200c.9 1.300 1 3 .6 4.500c-.6 2-1.500 3.600-2.900 4.900c-.8.600-1.500-.3-1.500-1.300c.1-1.300-.2-2.500-1-3.400c-1-.9-2.700-.7-3.200-2c-.5-1.300.7-2.200 1.700-2.800c-.9-.6-1.700-1.500-1.300-2.600z" fill="#fff"/></svg>
<div class="a" style="left:432px;top:83px;width:1px;height:24px;background:#c6c6c6"></div>
<svg class="a" style="left:439px;top:83px" width="24" height="24" viewBox="0 0 24 24"><ellipse cx="12" cy="21" rx="8" ry="1.300" fill="#e4e4e4"/><path d="M3.200 12l9.300-8.800v5h8v7.600h-8v5z" fill="#cacaca"/><path d="M3.200 12l9.300-8.800v5h8v3.800z" fill="#d2d2d2"/></svg>
<svg class="a" style="left:470.5px;top:83px" width="24" height="24" viewBox="0 0 24 24"><ellipse cx="12" cy="21" rx="8" ry="1.300" fill="#e4e4e4"/><path d="M20.800 12l-9.300-8.800v5h-8v7.600h8v5z" fill="#c6c6c6"/><path d="M20.800 12l-9.300-8.800v5h-8v3.800z" fill="#cecece"/></svg>
<svg class="a" style="left:501.5px;top:82.5px" width="24" height="24" viewBox="0 0 24 24"><ellipse cx="12" cy="21.800" rx="9" ry="1.300" fill="#e0e0e0"/><path d="M2.500 11.500c0-5.500 4-9.500 9.500-9.500c3 0 5 1 6.500 2.500l2.500-2.500v8.500h-8.500l3-3c-1-1-2.200-1.500-3.800-1.500c-3 0-5 2.200-5 5.500z" fill="url(#refg)"/><path d="M21.500 11.500c0 5.500-4 9.500-9.500 9.500c-3 0-5-1-6.500-2.500l-2.500 2.500v-8.500h8.500l-3 3c1 1 2.200 1.500 3.800 1.500c3 0 5-2.200 5-5.500z" fill="url(#refg)"/></svg>
<svg class="a" style="left:532.2px;top:82px" width="24" height="24" viewBox="0 0 24 24"><ellipse cx="12" cy="22" rx="8" ry="1.500" fill="#dcdcdc"/><path d="M7.400 1h9.200l6.400 6.400v9.200l-6.400 6.400h-9.200l-6.400-6.400v-9.200z" fill="#a6a6a6"/><path d="M1 12.500l22-1.500v5.600l-6.400 6.400h-9.200l-6.400-6.400z" fill="#989898"/><path d="M7.500 7.500l9 9M16.500 7.500l-9 9" stroke="#f4f4f4" stroke-width="2.800"/></svg>
<div class="a" style="left:562px;top:83px;width:1px;height:24px;background:#c6c6c6"></div>
<svg class="a" style="left:569px;top:83px" width="24" height="24" viewBox="0 0 24 24"><path d="M9.800 5h4.400v4.800h4.800v4.400h-4.800v4.800h-4.400v-4.800h-4.800v-4.400h4.800z" fill="#bcbcbc" stroke="#c8c8c8" stroke-width=".6"/></svg>
<svg class="a" style="left:600px;top:83px" width="24" height="24" viewBox="0 0 24 24"><rect x="4" y="10" width="16" height="4.400" fill="#bebebe" stroke="#c8c8c8" stroke-width=".6"/></svg>
<div class="a" style="left:629px;top:79px;width:1px;height:32px;background:#a0a0a0"></div><div class="a" style="left:630px;top:79px;width:1px;height:32px;background:#fff"></div>
<svg class="a" style="left:634px;top:82px" width="3" height="28"><rect x="1" y="0" width="1" height="1" fill="#9c9c9c"/><rect x="0" y="1" width="1" height="1" fill="#b8b8b8"/><rect x="1" y="1" width="1" height="1" fill="#c6c6c6"/><rect x="0" y="0" width="1" height="1" fill="#dcdcdc"/><rect x="1" y="4" width="1" height="1" fill="#9c9c9c"/><rect x="0" y="5" width="1" height="1" fill="#b8b8b8"/><rect x="1" y="5" width="1" height="1" fill="#c6c6c6"/><rect x="0" y="4" width="1" height="1" fill="#dcdcdc"/><rect x="1" y="8" width="1" height="1" fill="#9c9c9c"/><rect x="0" y="9" width="1" height="1" fill="#b8b8b8"/><rect x="1" y="9" width="1" height="1" fill="#c6c6c6"/><rect x="0" y="8" width="1" height="1" fill="#dcdcdc"/><rect x="1" y="12" width="1" height="1" fill="#9c9c9c"/><rect x="0" y="13" width="1" height="1" fill="#b8b8b8"/><rect x="1" y="13" width="1" height="1" fill="#c6c6c6"/><rect x="0" y="12" width="1" height="1" fill="#dcdcdc"/><rect x="1" y="16" width="1" height="1" fill="#9c9c9c"/><rect x="0" y="17" width="1" height="1" fill="#b8b8b8"/><rect x="1" y="17" width="1" height="1" fill="#c6c6c6"/><rect x="0" y="16" width="1" height="1" fill="#dcdcdc"/><rect x="1" y="20" width="1" height="1" fill="#9c9c9c"/><rect x="0" y="21" width="1" height="1" fill="#b8b8b8"/><rect x="1" y="21" width="1" height="1" fill="#c6c6c6"/><rect x="0" y="20" width="1" height="1" fill="#dcdcdc"/><rect x="1" y="24" width="1" height="1" fill="#9c9c9c"/><rect x="0" y="25" width="1" height="1" fill="#b8b8b8"/><rect x="1" y="25" width="1" height="1" fill="#c6c6c6"/><rect x="0" y="24" width="1" height="1" fill="#dcdcdc"/></svg>
<div class="a" style="left:641px;top:83px;width:73px;height:24px;background:#e1e1e1;border:1px solid #adadad"></div>
<svg class="a" style="left:656.5px;top:86px" width="16" height="18" viewBox="0 0 16 18"><path d="M1.500 5.600l10.750-4v10.800l-10.550 3.900z" fill="#2cc6ce" stroke="#1a8a92" stroke-width=".8"/><path d="M4 7.900l6.100-3.300v5.200l-6.100 2.500z" fill="#fff" stroke="#111" stroke-width=".9"/><path d="M1.500 3v15M.3 5.600l2.400-.9M11 1.400l2.400-.9M12.250 0v17.500h1.600M.3 17l2.400-.9M11 12.900l2.400-.9" stroke="#4fb4bc" stroke-width=".5" fill="none"/></svg>
<div class="t" style="left:675.6px;top:87.7px;letter-spacing:-0.521px;">Auto</div>
<div class="a" style="left:716px;top:83px;width:20px;height:24px;background:#e1e1e1;border:1px solid #adadad"></div>
<svg class="a" style="left:717.5px;top:88.5px" width="17" height="13" viewBox="0 0 17 13"><path d="M1.200 8.100l7.600-3.700l1.200 2.400l-7.600 3.700c-1.600.7-2.700-1.600-1.200-2.400z" fill="#14b4ac" stroke="#0a6e6a" stroke-width=".6"/><path d="M7.500 2.200l7.500-1.400l1.400 2.300l-5.600 6.100l-2.400-2.100l1.300-1.200z" fill="#cdf2ea" stroke="#2a9088" stroke-width=".8" stroke-linejoin="round"/><path d="M9.700 5.900l5.300-5.100" stroke="#8adcd0" stroke-width=".5"/></svg>
<div class="a" style="left:738px;top:83px;width:20px;height:24px;background:#e1e1e1;border:1px solid #adadad"></div>
<div class="a" style="left:740px;top:87px;width:16px;height:16px;background:#000"></div>
<div class="a" style="left:760px;top:83px;width:20px;height:24px;background:#e1e1e1;border:1px solid #adadad"></div>
<div class="a" style="left:762px;top:87px;width:16px;height:16px;background:#cdcdcd"></div>
<div class="a" style="left:781px;top:82px;width:44.5px;height:26px;background:#fff;border:1px solid #7a7a7a"></div>
<div class="t" style="left:785.0px;top:88.7px;letter-spacing:-0.716px;">2px</div>
<div class="a" style="left:810px;top:84px;width:14px;height:11px;background:#f0f0f0;border:1px solid #d0d0d0"></div><div class="a" style="left:810px;top:96px;width:14px;height:10px;background:#f0f0f0;border:1px solid #d0d0d0"></div>
<svg class="a" style="left:814px;top:87.500px" width="6" height="4" viewBox="0 0 6 4"><path d="M0 3.700l3-3.500l3 3.500z" fill="#000"/></svg><svg class="a" style="left:814px;top:98.800px" width="6" height="4" viewBox="0 0 6 4"><path d="M0 .3l3 3.500l3-3.500z" fill="#000"/></svg>
<div class="a" style="left:826px;top:82px;width:55px;height:26px;background:#fff;border:1px solid #7a7a7a"></div>
<div class="t" style="left:829.8px;top:88.7px;letter-spacing:-0.539px;">0,20</div>
<div class="a" style="left:865px;top:84px;width:14px;height:11px;background:#f0f0f0;border:1px solid #d0d0d0"></div><div class="a" style="left:865px;top:96px;width:14px;height:10px;background:#f0f0f0;border:1px solid #d0d0d0"></div>
<svg class="a" style="left:869px;top:87.500px" width="6" height="4" viewBox="0 0 6 4"><path d="M0 3.700l3-3.500l3 3.500z" fill="#000"/></svg><svg class="a" style="left:869px;top:98.800px" width="6" height="4" viewBox="0 0 6 4"><path d="M0 .3l3 3.500l3-3.500z" fill="#000"/></svg>
<div class="a" style="left:882px;top:83px;width:20px;height:23px;background:#e1e1e1;border:1px solid #d6d6d6"></div>
<svg class="a" style="left:885.8px;top:87.1px" width="14" height="15" viewBox="0 0 14 15"><rect x=".5" y=".3" width="5.500" height="14.400" rx="1" fill="#555"/><rect x="1.500" y="1.500" width="3.500" height="3" fill="#f01010"/><rect x="1.500" y="5" width="3.500" height="3.500" fill="#f4e800"/><rect x="1.500" y="10" width="3.500" height="3.500" fill="#10d820"/><path d="M2.500 6.500h5v-3l5.500 5.500l-5.500 5.500v-3h-5z" fill="#3c78e0" stroke="#1a3ca0" stroke-width=".5"/></svg>

<div class="a" style="left:0;top:113px;width:633px;height:19px;background:#dcdcdc;border:1px solid #c4c4c4;border-left:0"></div>
<div class="t" style="left:1.7px;top:116.1px;letter-spacing:-0.466px;font-size:11px;">Combo View</div>
<svg class="a" style="left:600px;top:115px" width="32" height="14" viewBox="600 115 32 14"><g shape-rendering="crispEdges"><rect x="606" y="118" width="6" height="6" fill="#000"/><rect x="607" y="120" width="4" height="3" fill="#dcdcdc"/><rect x="604" y="121" width="7" height="6" fill="#000"/><rect x="605" y="123" width="5" height="3" fill="#dcdcdc"/></g><path d="M620.700 119.200l6.600 6.600M627.300 119.200l-6.600 6.600" stroke="#000" stroke-width="1.600"/></svg>
<div class="a" style="left:0;top:154px;width:631px;height:1px;background:#d9d9d9"></div>
<div class="a" style="left:0;top:134px;width:54px;height:21px;background:#fff;border:1px solid #d9d9d9;border-bottom:0"></div>
<div class="a" style="left:54px;top:136px;width:46px;height:18px;background:#f0f0f0;border:1px solid #d9d9d9;border-bottom:0;border-left:0"></div>
<div class="t" style="left:11.4px;top:138.1px;letter-spacing:-0.392px;font-size:11px;">Model</div>
<div class="t" style="left:63.3px;top:139.1px;letter-spacing:-0.424px;font-size:11px;">Tasks</div>
<div class="a" style="left:2px;top:156px;width:627px;height:661px;background:#fff;border:1px solid #828790"></div>
<div class="t" style="left:7.7px;top:161.7px;letter-spacing:-0.003px;">Labels &amp; Attributes</div>
<div class="a" style="left:314px;top:158px;width:1px;height:20px;background:#e5e5e5"></div>
<div class="a" style="left:4px;top:180px;width:310px;height:17px;border:1px dotted #000"></div>
<div class="t" style="left:6.3px;top:181.7px;letter-spacing:0.145px;">Application</div>
<div class="a" style="left:612px;top:157px;width:16px;height:658px;background:#f0f0f0"></div>
<div class="a" style="left:612px;top:174px;width:15px;height:224px;background:#cdcdcd"></div>
<svg class="a" style="left:612px;top:157px" width="16" height="17" viewBox="0 0 16 17"><path d="M3.800 10.800l3.700-3.700l3.700 3.700" stroke="#505050" stroke-width="2.100" fill="none"/></svg>
<svg class="a" style="left:612px;top:798px" width="16" height="17" viewBox="0 0 16 17"><path d="M3.800 8.200l3.700 3.700l3.700-3.700" stroke="#505050" stroke-width="2.100" fill="none"/></svg>
<div class="a" style="left:3px;top:157px;width:609px;height:659px;overflow:hidden">
<div class="a" style="left:-3px;top:-157px;width:640px;height:900px">
<svg class="a" style="left:8px;top:201px" width="10" height="10"><use href="#a-open"/></svg>
<svg class="a" style="left:25.5px;top:197px" width="19" height="18" viewBox="-1.5 -1 19 18"><use href="#i-doc"/></svg>
<div class="t" style="left:48.3px;top:199.7px;letter-spacing:0.090px;font-weight:bold;">y-motor-bracket</div>
<svg class="a" style="left:28px;top:219px" width="10" height="10"><use href="#a-open"/></svg>
<svg class="a" style="left:45.5px;top:215px" width="19" height="18" viewBox="-1.5 -1 19 18"><use href="#i-blue"/><use href="#i-badge"/></svg>
<div class="t" style="left:68.3px;top:217.7px;letter-spacing:-0.334px;">Group044</div>
<svg class="a" style="left:48px;top:237px" width="10" height="10"><use href="#a-open"/></svg>
<svg class="a" style="left:65.5px;top:233px" width="19" height="18" viewBox="-1.5 -1 19 18"><use href="#i-gray"/><use href="#i-badge"/></svg>
<div class="t" style="left:88.3px;top:235.7px;letter-spacing:-0.139px;color:#757575;">difference002</div>
<svg class="a" style="left:85.5px;top:251px" width="19" height="18" viewBox="-1.5 -1 19 18"><use href="#i-cube"/></svg>
<div class="t" style="left:108.3px;top:253.7px;letter-spacing:-0.005px;color:#757575;">cube</div>
<svg class="a" style="left:68px;top:273px" width="10" height="10"><use href="#a-open"/></svg>
<svg class="a" style="left:85.5px;top:269px" width="19" height="18" viewBox="-1.5 -1 19 18"><use href="#i-gray"/><use href="#i-badge"/></svg>
<div class="t" style="left:108.3px;top:271.7px;letter-spacing:0.208px;color:#757575;">union</div>
<svg class="a" style="left:105.5px;top:287px" width="19" height="18" viewBox="-1.5 -1 19 18"><use href="#i-cyl"/></svg>
<div class="t" style="left:128.3px;top:289.7px;letter-spacing:0.081px;color:#757575;">cylinder</div>
<svg class="a" style="left:105.5px;top:305px" width="19" height="18" viewBox="-1.5 -1 19 18"><use href="#i-cube"/></svg>
<div class="t" style="left:128.3px;top:307.7px;letter-spacing:-0.435px;color:#757575;">cube001</div>
<svg class="a" style="left:105.5px;top:323px" width="19" height="18" viewBox="-1.5 -1 19 18"><use href="#i-cube"/></svg>
<div class="t" style="left:128.3px;top:325.7px;letter-spacing:-0.335px;color:#757575;">cube002</div>
<svg class="a" style="left:105.5px;top:341px" width="19" height="18" viewBox="-1.5 -1 19 18"><use href="#i-cube"/></svg>
<div class="t" style="left:128.3px;top:343.7px;letter-spacing:-0.335px;color:#757575;">cube003</div>
<svg class="a" style="left:105.5px;top:359px" width="19" height="18" viewBox="-1.5 -1 19 18"><use href="#i-cube"/></svg>
<div class="t" style="left:128.3px;top:361.7px;letter-spacing:-0.335px;color:#757575;">cube004</div>
<svg class="a" style="left:88px;top:381px" width="10" height="10"><use href="#a-closed"/></svg>
<svg class="a" style="left:105.5px;top:377px" width="19" height="18" viewBox="-1.5 -1 19 18"><use href="#i-gray"/></svg>
<div class="t" style="left:128.3px;top:379.7px;letter-spacing:-0.334px;color:#757575;">Group002</div>
<svg class="a" style="left:88px;top:399px" width="10" height="10"><use href="#a-closed"/></svg>
<svg class="a" style="left:105.5px;top:395px" width="19" height="18" viewBox="-1.5 -1 19 18"><use href="#i-gray"/></svg>
<div class="t" style="left:128.3px;top:397.7px;letter-spacing:-0.334px;color:#757575;">Group003</div>
<svg class="a" style="left:88px;top:417px" width="10" height="10"><use href="#a-open"/></svg>
<svg class="a" style="left:105.5px;top:413px" width="19" height="18" viewBox="-1.5 -1 19 18"><use href="#i-gray"/><use href="#i-badge"/></svg>
<div class="t" style="left:128.3px;top:415.7px;letter-spacing:-0.334px;color:#757575;">Group010</div>
<svg class="a" style="left:108px;top:435px" width="10" height="10"><use href="#a-open"/></svg>
<svg class="a" style="left:125.5px;top:431px" width="19" height="18" viewBox="-1.5 -1 19 18"><use href="#i-gray"/><use href="#i-badge"/></svg>
<div class="t" style="left:148.3px;top:433.7px;letter-spacing:-0.334px;color:#757575;">Group006</div>
<svg class="a" style="left:128px;top:453px" width="10" height="10"><use href="#a-open"/></svg>
<svg class="a" style="left:145.5px;top:449px" width="19" height="18" viewBox="-1.5 -1 19 18"><use href="#i-gray"/><use href="#i-badge"/></svg>
<div class="t" style="left:168.3px;top:451.7px;letter-spacing:-0.334px;color:#757575;">Group004</div>
<svg class="a" style="left:148px;top:471px" width="10" height="10"><use href="#a-open"/></svg>
<svg class="a" style="left:165.5px;top:467px" width="19" height="18" viewBox="-1.5 -1 19 18"><use href="#i-ext"/><use href="#i-badge"/></svg>
<div class="t" style="left:188.3px;top:469.7px;letter-spacing:-0.309px;color:#757575;">LinearExtrude</div>
<div class="a" style="left:183px;top:485px;width:132px;height:17px;background:#e5f3ff"></div>
<svg class="a" style="left:168px;top:489px" width="10" height="10"><use href="#a-closed"/></svg>
<svg class="a" style="left:185.5px;top:485px" width="19" height="18" viewBox="-1.5 -1 19 18"><use href="#i-ref"/><use href="#i-badge"/></svg>
<div class="t" style="left:208.3px;top:487.7px;letter-spacing:-0.300px;color:#757575;">RefineLinearExtrude</div>
<svg class="a" style="left:165.5px;top:503px" width="19" height="18" viewBox="-1.5 -1 19 18"><use href="#i-prism"/></svg>
<div class="t" style="left:188.3px;top:505.7px;letter-spacing:-0.207px;color:#757575;">prism004</div>
<svg class="a" style="left:128px;top:525px" width="10" height="10"><use href="#a-open"/></svg>
<svg class="a" style="left:145.5px;top:521px" width="19" height="18" viewBox="-1.5 -1 19 18"><use href="#i-gray"/><use href="#i-badge"/></svg>
<div class="t" style="left:168.3px;top:523.7px;letter-spacing:-0.334px;color:#757575;">Group005</div>
<svg class="a" style="left:148px;top:543px" width="10" height="10"><use href="#a-closed"/></svg>
<svg class="a" style="left:165.5px;top:539px" width="19" height="18" viewBox="-1.5 -1 19 18"><use href="#i-ext"/><use href="#i-badge"/></svg>
<div class="t" style="left:188.3px;top:541.7px;letter-spacing:-0.421px;color:#757575;">LinearExtrude001</div>
<svg class="a" style="left:165.5px;top:557px" width="19" height="18" viewBox="-1.5 -1 19 18"><use href="#i-prism"/></svg>
<div class="t" style="left:188.3px;top:559.7px;letter-spacing:-0.207px;color:#757575;">prism005</div>
<svg class="a" style="left:108px;top:579px" width="10" height="10"><use href="#a-open"/></svg>
<svg class="a" style="left:125.5px;top:575px" width="19" height="18" viewBox="-1.5 -1 19 18"><use href="#i-gray"/><use href="#i-badge"/></svg>
<div class="t" style="left:148.3px;top:577.7px;letter-spacing:-0.334px;color:#757575;">Group009</div>
<svg class="a" style="left:128px;top:597px" width="10" height="10"><use href="#a-closed"/></svg>
<svg class="a" style="left:145.5px;top:593px" width="19" height="18" viewBox="-1.5 -1 19 18"><use href="#i-gray"/><use href="#i-badge"/></svg>
<div class="t" style="left:168.3px;top:595.7px;letter-spacing:-0.334px;color:#757575;">Group007</div>
<svg class="a" style="left:128px;top:615px" width="10" height="10"><use href="#a-closed"/></svg>
<svg class="a" style="left:145.5px;top:611px" width="19" height="18" viewBox="-1.5 -1 19 18"><use href="#i-gray"/><use href="#i-badge"/></svg>
<div class="t" style="left:168.3px;top:613.7px;letter-spacing:-0.334px;color:#757575;">Group008</div>
<svg class="a" style="left:48px;top:633px" width="10" height="10"><use href="#a-closed"/></svg>
<svg class="a" style="left:65.5px;top:629px" width="19" height="18" viewBox="-1.5 -1 19 18"><use href="#i-gray"/><use href="#i-badge"/></svg>
<div class="t" style="left:88.3px;top:631.7px;letter-spacing:-0.422px;color:#757575;">Group021</div>
<svg class="a" style="left:48px;top:651px" width="10" height="10"><use href="#a-closed"/></svg>
<svg class="a" style="left:65.5px;top:647px" width="19" height="18" viewBox="-1.5 -1 19 18"><use href="#i-gray"/></svg>
<div class="t" style="left:88.3px;top:649.7px;letter-spacing:-0.062px;color:#757575;">union011</div>
<svg class="a" style="left:48px;top:669px" width="10" height="10"><use href="#a-closed"/></svg>
<svg class="a" style="left:65.5px;top:665px" width="19" height="18" viewBox="-1.5 -1 19 18"><use href="#i-gray"/><use href="#i-badge"/></svg>
<div class="t" style="left:88.3px;top:667.7px;letter-spacing:-0.334px;color:#757575;">Group038</div>
<svg class="a" style="left:48px;top:687px" width="10" height="10"><use href="#a-closed"/></svg>
<svg class="a" style="left:65.5px;top:683px" width="19" height="18" viewBox="-1.5 -1 19 18"><use href="#i-gray"/></svg>
<div class="t" style="left:88.3px;top:685.7px;letter-spacing:-0.334px;color:#757575;">Group043</div>
<svg class="a" style="left:28px;top:705px" width="10" height="10"><use href="#a-closed"/></svg>
<svg class="a" style="left:45.5px;top:701px" width="19" height="18" viewBox="-1.5 -1 19 18"><use href="#i-fold"/></svg>
<div class="t" style="left:68.3px;top:703.7px;">0</div>
<svg class="a" style="left:28px;top:723px" width="10" height="10"><use href="#a-closed"/></svg>
<svg class="a" style="left:45.5px;top:719px" width="19" height="18" viewBox="-1.5 -1 19 18"><use href="#i-fold"/></svg>
<div class="t" style="left:68.3px;top:721.7px;letter-spacing:-0.999px;">0001</div>
<svg class="a" style="left:28px;top:741px" width="10" height="10"><use href="#a-closed"/></svg>
<svg class="a" style="left:45.5px;top:737px" width="19" height="18" viewBox="-1.5 -1 19 18"><use href="#i-fold"/></svg>
<div class="t" style="left:68.3px;top:739.7px;letter-spacing:-0.749px;">0002</div>
<svg class="a" style="left:28px;top:759px" width="10" height="10"><use href="#a-closed"/></svg>
<svg class="a" style="left:45.5px;top:755px" width="19" height="18" viewBox="-1.5 -1 19 18"><use href="#i-fold"/></svg>
<div class="t" style="left:68.3px;top:757.7px;letter-spacing:-0.749px;">0003</div>
<svg class="a" style="left:28px;top:777px" width="10" height="10"><use href="#a-closed"/></svg>
<svg class="a" style="left:45.5px;top:773px" width="19" height="18" viewBox="-1.5 -1 19 18"><use href="#i-fold"/></svg>
<div class="t" style="left:68.3px;top:775.7px;letter-spacing:-0.749px;">0004</div>
<svg class="a" style="left:28px;top:795px" width="10" height="10"><use href="#a-closed"/></svg>
<svg class="a" style="left:45.5px;top:791px" width="19" height="18" viewBox="-1.5 -1 19 18"><use href="#i-fold"/></svg>
<div class="t" style="left:68.3px;top:793.7px;letter-spacing:-0.749px;">0005</div>
<svg class="a" style="left:28px;top:813px" width="10" height="10"><use href="#a-closed"/></svg>
<svg class="a" style="left:45.5px;top:809px" width="19" height="18" viewBox="-1.5 -1 19 18"><use href="#i-fold"/></svg>
<div class="t" style="left:68.3px;top:811.7px;letter-spacing:-0.749px;">0006</div>
</div></div>

<div class="a" style="left:0;top:994px;width:630px;height:16px;background:#fff"></div>
<div class="a" style="left:630px;top:154px;width:1px;height:857px;background:#dcdcdc"></div><div class="a" style="left:629px;top:155px;width:1px;height:855px;background:#fafafa"></div>
<div class="a" style="left:0;top:1010px;width:631px;height:1px;background:#dcdcdc"></div>
<div class="a" style="left:0;top:155px;width:1px;height:856px;background:#d2d2d2"></div>
<div class="a" style="left:2px;top:822px;width:625px;height:172px;background:#fff;border:1px solid #dcdcdc"></div>
<div class="a" style="left:4px;top:824px;width:621px;height:167px;background:#fff;border:1px solid #828790"></div>
<div class="a" style="left:104px;top:826px;width:1px;height:22px;background:#e5e5e5"></div>
<div class="a" style="left:622px;top:826px;width:1px;height:22px;background:#e5e5e5"></div>
<div class="t" style="left:9.7px;top:829.7px;letter-spacing:-0.144px;">Property</div>
<div class="t" style="left:109.5px;top:829.7px;letter-spacing:-0.160px;">Value</div>
<svg class="a" style="left:0;top:991px" width="100" height="19" viewBox="0 991 100 19"><path d="M2.200 993.400c1.500 5 3 12.500 7.500 14h29.500c4.500-1.500 5.500-9 7.700-14z" fill="#fff" stroke="none"/><path d="M2.200 993.400c1.500 5 3 12.500 7.500 14h29.500c4.500-1.500 5.500-9 7.700-14" fill="none" stroke="#1a1a1a" stroke-width="1.100"/><path d="M48.100 994.300c1.500 4.500 2.500 10.500 7 11.900h31.800c4-1.400 4.700-7.400 6.200-11.900" fill="#f0f0f0" stroke="#1a1a1a" stroke-width="1.100"/></svg>
<div class="t" style="left:13.8px;top:994.1px;letter-spacing:-0.611px;font-size:11px;">View</div>
<div class="t" style="left:59.5px;top:993.1px;letter-spacing:-0.209px;font-size:11px;">Data</div>
<div class="a" style="left:636px;top:112px;width:1px;height:878px;background:#f8f8f8"></div><div class="a" style="left:637px;top:988px;width:1283px;height:1px;background:#a0a0a0"></div><div class="a" style="left:637px;top:989px;width:1283px;height:1px;background:#fcfcfc"></div>
<div class="a" style="left:637px;top:112px;width:1283px;height:876px;background:linear-gradient(#333366,#9797aa)"></div>
<div class="a" style="left:637px;top:112px;width:1283px;height:1px;background:rgba(0,0,40,.18)"></div><div class="a" style="left:637px;top:112px;width:1px;height:876px;background:rgba(0,0,40,.10)"></div>
<svg class="a" style="left:637px;top:112px" width="1283" height="876" viewBox="637 112 1283 876"><g stroke="#000" fill="none" stroke-linecap="square"><path d="M1222 677L1315.6 207" stroke-width="1.96"/><path d="M1315.6 207L1467.2 207" stroke-width="2.00"/><path d="M1467.2 207L1551 291" stroke-width="1.42"/><path d="M1551 291L1551 677" stroke-width="2.00"/><path d="M1551 677L1222 677" stroke-width="2.00"/><path d="M1222 677L1315.7 489" stroke-width="1.79"/><path d="M1315.7 489L1381.5 489" stroke-width="2.00"/><path d="M1381.5 489L1475 582.5" stroke-width="1.41"/><path d="M1475 582.5L1475 677" stroke-width="2.00"/><path d="M1006 677L1069.4 523.6" stroke-width="1.85"/><path d="M1069.4 523.6L1132 461" stroke-width="1.41"/><path d="M1132 461L1311.3 461" stroke-width="2.00"/><path d="M1311.3 461L1374.5 523.6" stroke-width="1.42"/><path d="M1374.5 523.6L1437.4 677" stroke-width="1.85"/><path d="M1437.4 677L1374.5 829.4" stroke-width="1.85"/><path d="M1374.5 829.4L1222 892.4" stroke-width="1.85"/><path d="M1222 892.4L1069.4 829.4" stroke-width="1.85"/><path d="M1069.4 829.4L1006 677" stroke-width="1.85"/></g></svg>
<svg class="a" style="left:1866px;top:904px" width="52" height="50" viewBox="1866 904 52 50"><path d="M1876.200 914v29" stroke="#1a8a1a" stroke-width="1.400"/><path d="M1876.200 913.500l3.600 11.500h-7.200z" fill="#1a8a1a"/><path d="M1876.200 943.800h30" stroke="#8a1a1a" stroke-width="1.400"/><path d="M1907 943.800l-11.200 3.600v-7.200z" fill="#8a1a1a"/><path d="M1876.200 940.300l4.200 4.200l-4.200 4.200l-4.200-4.200z" fill="#1a1a88"/><g font-family="Liberation Sans" font-size="9" fill="#000"><text x="1878.600" y="914.800">Y</text><text x="1878.600" y="944.300">Z</text><text x="1908.600" y="945">X</text></g></svg>
<div class="a" style="left:639px;top:989px;width:112px;height:21px;background:#f0f0f0;border:1px solid #d9d9d9;border-top:0"></div>
<div class="a" style="left:750px;top:988px;width:166px;height:24px;background:#fff;border:1px solid #e3e3e3;border-top:0"></div>
<svg class="a" style="left:649px;top:990px" width="16" height="16" viewBox="0 0 16 16"><ellipse cx="8" cy="15" rx="5" ry=".8" fill="#c8c8c8"/><circle cx="7.900" cy="8" r="6.800" fill="url(#globe)" stroke="#3c62a8" stroke-width=".5"/><path d="M3 9c.8-1 2-.8 2.800 0c.8 1 .6 2.200 0 3.500c-.4 1-1 1.300-1.400.6c-.3-1.400-1.700-2.700-1.400-4.100z" fill="#fff"/><path d="M8.300 6.500c.7-1.400 2.400-2 4-1.700c1 .3 1.400 1.700 1 3c-.3 1.400-1 2.700-2 3.700c-.7.400-1-.7-1-1.700c-.7-.7-2-2-2-3.300z" fill="#fff"/><path d="M4 4c1-1.400 2.700-2.400 4.400-2.400c.7.300-.3 1-1.400 1.400c-1 .7-2 1.700-3 1z" fill="#fff" opacity=".9"/></svg>
<div class="t" style="left:668.3px;top:992.2px;letter-spacing:-0.427px;">Start page</div>
<svg class="a" style="left:724px;top:992px" width="14" height="14" viewBox="0 0 14 14"><rect x=".5" y=".5" width="13" height="13" rx="1.500" fill="#bcbcbc" stroke="#a0a0a0"/><path d="M4 4l6 6M10 4l-6 6" stroke="#fff" stroke-width="2"/></svg>
<svg class="a" style="left:762.300px;top:988.200px" width="20" height="20"><use href="#logo"/></svg>
<div class="t" style="left:783.9px;top:992.9px;letter-spacing:-0.268px;">y-motor-bracket : 1*</div>
<svg class="a" style="left:888px;top:993px" width="14" height="14" viewBox="0 0 14 14"><rect x=".5" y=".5" width="13" height="13" rx="1.500" fill="#e0694c" stroke="#c84a30"/><path d="M4 4l6 6M10 4l-6 6" stroke="#fff" stroke-width="2"/></svg>
<div class="t" style="left:6.6px;top:1018.7px;letter-spacing:-0.172px;">RefineLinearExtrude: check failed, shape may be empty</div>
<div class="t" style="left:1799.7px;top:1019.7px;letter-spacing:-0.425px;">13.66 x 9.33 mm</div>
<div class="a" style="left:315px;top:482px;width:302px;height:20px;background:#fff;border:1px solid #646464;box-shadow:4px 4px 3px -1px rgba(0,0,0,.5)"></div>
<div class="t" style="left:321.7px;top:484.7px;letter-spacing:-0.175px;color:#575757;">RefineLinearExtrude: check failed, shape may be empty</div>
</body></html>
